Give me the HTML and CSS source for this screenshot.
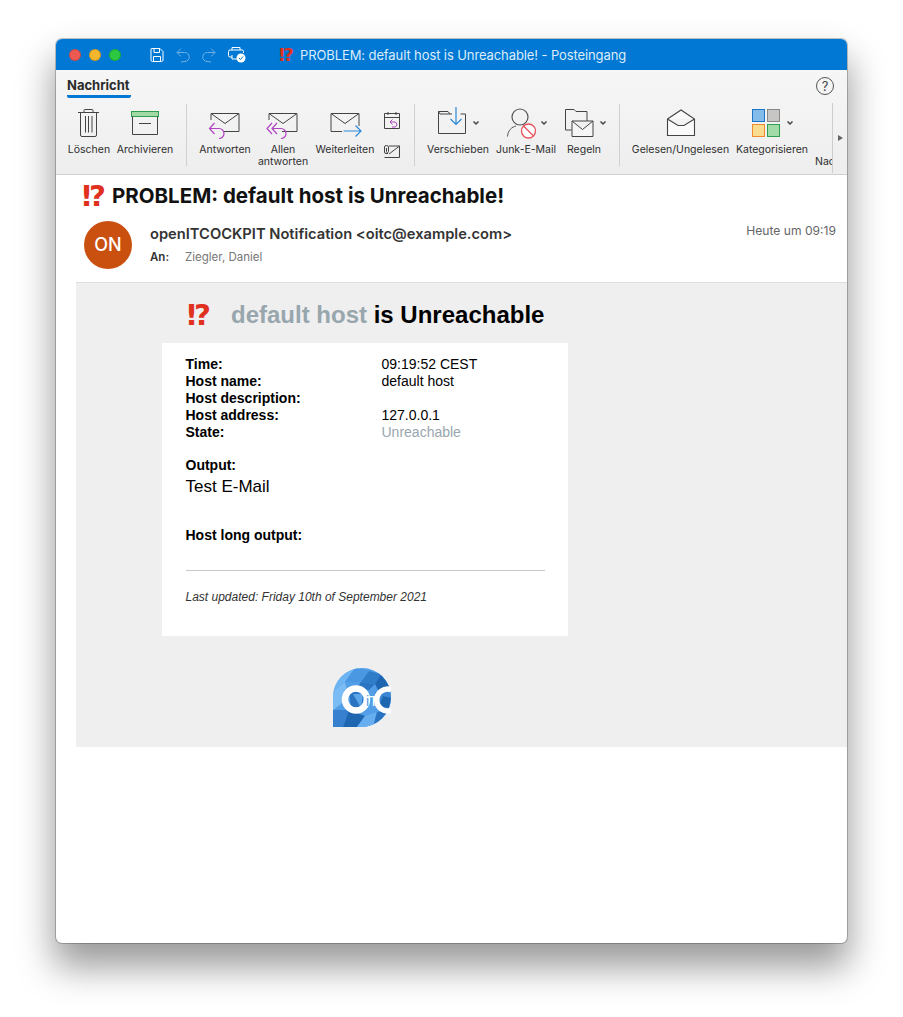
FILE: index.html
```html
<!DOCTYPE html>
<html lang="de">
<head>
<meta charset="utf-8">
<title>PROBLEM: default host is Unreachable!</title>
<link rel="stylesheet" href="styles.css">
</head>
<body>
<div class="window">
  <header class="titlebar">
    <div class="lights"><span class="light red"></span><span class="light yellow"></span><span class="light green"></span></div>
    <div class="quick">
      <svg class="qa" width="14" height="16" viewBox="0 0 14 16"><path d="M1.500 1.500H10L13 4.500V13Q13 14.500 11.500 14.500H2.500Q1 14.500 1 13V2Q1 1.500 1.500 1.500ZM4 1.500V5.500H9.500V1.500M3.500 14.500V9.500H10.500V14.500" fill="none" stroke="#fff" stroke-width="1"/></svg>
      <svg class="qa" width="14" height="16" viewBox="0 0 14 16"><path d="M1 5.500H8.500A4.500 4.500 0 0 1 9 14.500L5 15M1 5.500L5 1.500M1 5.500L5 9.500" fill="none" stroke="#6fb1e6" stroke-width="1"/></svg>
      <svg class="qa" width="14" height="16" viewBox="0 0 14 16"><path d="M13 5.500H5.500A4.500 4.500 0 0 0 5 14.500L9 15M13 5.500L9 1.500M13 5.500L9 9.500" fill="none" stroke="#6fb1e6" stroke-width="1"/></svg>
      <svg class="qa" width="18" height="17" viewBox="0 0 18 17"><path d="M4 4V1.500H12V4M4 11H2Q.5 11 .5 9.500V5.500Q.5 4 2 4H14Q15.500 4 15.500 5.500V7M4 9V13H9" fill="none" stroke="#fff" stroke-width="1"/><circle cx="13" cy="12" r="4.500" fill="#fff"/><path d="M11 12L12.500 13.500L15 10.500" fill="none" stroke="#0078d4" stroke-width="1"/></svg>
    </div>
    <div class="wintitle"><span class="alert alert-title">⁉</span><span>PROBLEM: default host is Unreachable! - Posteingang</span></div>
  </header>

  <section class="ribbon">
    <div class="tabrow">
      <span class="tab">Nachricht</span>
      <span class="help">?</span>
    </div>
    <div class="toolrow">
      <div class="tools">
        <div class="tool w42">
          <svg width="42" height="36" viewBox="0 0 42 36"><g fill="none" stroke="#444" stroke-width="1"><path d="M10 7.500H31M16 7.500V5.500Q16 4.500 17 4.500H24Q25 4.500 25 5.500V7.500M12.500 7.500V30Q12.500 31.500 14 31.500H27Q28.500 31.500 28.500 30V7.500M17.500 11V27.500M20.500 11V27.500M24 11V27.500"/></g></svg>
          <span class="label">Löschen</span>
        </div>
        <div class="tool w56">
          <svg width="56" height="36" viewBox="0 0 56 36"><rect x="14.500" y="6.500" width="27" height="5" fill="#a3d9a5" stroke="#2e9e4f"/><path d="M15.500 11.500V29.500H40.500V11.500M22 18.500H34" fill="none" stroke="#444"/></svg>
          <span class="label">Archivieren</span>
        </div>
        <span class="sep"></span>
        <div class="tool w52">
          <svg width="52" height="36" viewBox="0 0 52 36"><path d="M12 15V8.500H40V26.500H25M12 8.500L26 18.500L40 8.500" fill="none" stroke="#444"/><path d="M15.500 18L10.500 23.500L15.500 29M10.500 23.500H20A4.700 4.700 0 0 1 20 33.500" fill="none" stroke="#b146c2" stroke-width="1.200"/></svg>
          <span class="label">Antworten</span>
        </div>
        <div class="tool w50">
          <svg width="50" height="36" viewBox="0 0 50 36"><path d="M11 15V8.500H39V26.500H24M11 8.500L25 18.500L39 8.500" fill="none" stroke="#444"/><path d="M14 18L9 23.500L14 29M19 18L14 23.500L19 29M14 23.500H23A4.700 4.700 0 0 1 23 33.500" fill="none" stroke="#b146c2" stroke-width="1.200"/></svg>
          <span class="label">Allen<br>antworten</span>
        </div>
        <div class="tool w60">
          <svg width="60" height="36" viewBox="0 0 60 36"><path d="M44 21V8.500H16V26.500H27M16 8.500L30 18.500L44 8.500" fill="none" stroke="#444"/><path d="M28.500 26H46M40.500 20.500L46 26L40.500 31.500" fill="none" stroke="#2b88d8" stroke-width="1.200"/></svg>
          <span class="label">Weiterleiten</span>
        </div>
        <svg class="minis" width="24" height="54" viewBox="0 0 24 54"><path d="M4.500 8.500H19.500V23.500H4.500ZM4.500 12.500H19.500M8 7V10M16 7V10" fill="none" stroke="#444"/><path d="M12.500 14.500L10 17L12.500 19.500M10 17H15A2.600 2.600 0 0 1 15 22H12" fill="none" stroke="#b146c2"/><path d="M9 41H19.500V52.500H4.500M9 49L19.500 41" fill="none" stroke="#444"/><path d="M8 48.500H6Q4.500 48.500 4.500 47V42Q4.500 40.500 6.500 40.500Q8.500 40.500 8.500 42V46.500Q8.500 47.500 7.500 47.500Q6.500 47.500 6.500 46.500V43" fill="none" stroke="#444"/></svg>
        <span class="sep"></span>
        <div class="tool w62">
          <svg width="62" height="36" viewBox="0 0 62 36"><path d="M25 9H13L11.500 6.500V28.500H38.500V9H33.500M11.500 6.500H21L23 9" fill="none" stroke="#444"/><path d="M29 2V19.500M23.500 14L29 19.500L34.500 14" fill="none" stroke="#2b88d8" stroke-width="1.200"/><path d="M46.500 16.500L49 19L51.500 16.500" fill="none" stroke="#444" stroke-width="1.500"/></svg>
          <span class="label">Verschieben</span>
        </div>
        <div class="tool w60">
          <svg width="60" height="36" viewBox="0 0 60 36"><circle cx="24" cy="12" r="8" fill="none" stroke="#555" stroke-width="1.200"/><path d="M11.500 31.500C12 25 16 22 20 21" fill="none" stroke="#555"/><circle cx="32.500" cy="26" r="7" fill="#fff" stroke="#e8525a" stroke-width="1.300"/><path d="M27.500 21L37.500 31" stroke="#e8525a" stroke-width="1.300"/><path d="M45.500 16.500L48 19L50.500 16.500" fill="none" stroke="#444" stroke-width="1.500"/></svg>
          <span class="label">Junk-E-Mail</span>
        </div>
        <div class="tool w42">
          <svg width="42" height="36" viewBox="0 0 42 36"><path d="M2.500 4.500H11L13 6.500H24V16M2.500 4.500V25H8.500" fill="none" stroke="#444"/><path d="M9 16H30V31.500H9ZM9 16L19.500 24.500L30 16" fill="#f6f6f6" stroke="#444"/><path d="M37.500 16.500L40 19L42.500 16.500" fill="none" stroke="#444" stroke-width="1.500"/></svg>
          <span class="label">Regeln</span>
        </div>
        <span class="sep sep-wide"></span>
        <div class="tool w97">
          <svg width="97" height="36" viewBox="0 0 97 36"><path d="M35.500 14L49 5L62.500 14V30.500H35.500ZM35.500 14L46 20.500H52L62.500 14" fill="#fafafa" stroke="#444" stroke-width="1.100"/></svg>
          <span class="label">Gelesen/Ungelesen</span>
        </div>
        <div class="tool w72">
          <svg width="72" height="36" viewBox="0 0 72 36"><rect x="16.500" y="4.500" width="12" height="12" fill="#83bceb" stroke="#1b74c4"/><rect x="31.500" y="4.500" width="12" height="12" fill="#c8c6c4" stroke="#8a8886"/><rect x="16.500" y="19.500" width="12" height="12" fill="#f9dc8f" stroke="#f08a2c"/><rect x="31.500" y="19.500" width="12" height="12" fill="#a3dba8" stroke="#2e9e4f"/><path d="M51.500 16.500L54 19L56.500 16.500" fill="none" stroke="#444" stroke-width="1.500"/></svg>
          <span class="label">Kategorisieren</span>
        </div>
        <div class="tool w20 cut">
          <span class="label">Nac</span>
        </div>
      </div>
      <div class="scroller"><span class="scroll-arrow"></span></div>
    </div>
  </section>

  <section class="message">
    <h1 class="subject"><span class="alert alert-subject">⁉</span>PROBLEM: default host is Unreachable!</h1>
    <div class="meta">
      <div class="avatar">ON</div>
      <div class="who">
        <div class="sender">openITCOCKPIT Notification &lt;oitc@example.com&gt;</div>
        <div class="to"><b>An:</b><span>Ziegler, Daniel</span></div>
      </div>
      <div class="when">Heute um 09:19</div>
    </div>

    <div class="mail">
      <h2 class="headline"><span class="alert alert-head">⁉</span><span class="host">default host</span> is Unreachable</h2>
      <div class="card">
        <dl class="facts">
          <dt>Time:</dt><dd>09:19:52 CEST</dd>
          <dt>Host name:</dt><dd>default host</dd>
          <dt>Host description:</dt><dd></dd>
          <dt>Host address:</dt><dd>127.0.0.1</dd>
          <dt>State:</dt><dd class="muted">Unreachable</dd>
        </dl>
        <div class="strong out">Output:</div>
        <div class="outtext">Test E-Mail</div>
        <div class="strong long">Host long output:</div>
        <hr class="rule">
        <p class="updated">Last updated: Friday 10th of September 2021</p>
      </div>
      <svg class="logo" width="58" height="59" viewBox="0 0 58 59">
        <defs><clipPath id="drop"><path d="M0 59V29A29 29 0 0 1 58 29A30 30 0 0 1 28 59Z"/></clipPath></defs>
        <g clip-path="url(#drop)">
          <rect width="58" height="59" fill="#529fe8"/>
          <polygon points="0,0 22,0 12,14 0,24" fill="#6db4f2"/>
          <polygon points="22,0 36,3 28,14 12,14" fill="#4a97e2"/>
          <polygon points="36,3 48,6 42,16 28,14" fill="#2f7cc9"/>
          <polygon points="48,6 58,20 46,24 42,16" fill="#1f66b0"/>
          <polygon points="28,14 42,16 36,22 24,20" fill="#2a74c2"/>
          <polygon points="0,24 12,14 16,30 0,42" fill="#7cbcf4"/>
          <polygon points="16,22 30,26 30,40 18,40" fill="#2a74c2"/>
          <polygon points="30,26 20,26 28,40" fill="#5ea6ea"/>
          <polygon points="42,24 58,22 58,42 44,40" fill="#3a87d6"/>
          <polygon points="50,28 58,30 56,40 46,38" fill="#1f66b0"/>
          <polygon points="0,42 16,42 10,59 0,59" fill="#3680cf"/>
          <polygon points="10,59 16,42 32,48 24,59" fill="#1f66b0"/>
          <polygon points="32,48 44,44 40,59 24,59" fill="#66aef0"/>
          <polygon points="44,44 58,42 50,59 40,59" fill="#2a74c2"/>
        </g>
        <circle cx="23" cy="31.500" r="11" fill="none" stroke="#fff" stroke-width="6.500"/>
        <path d="M58 21.500A11 11 0 1 0 58 42.500" fill="none" stroke="#fff" stroke-width="5.500"/>
        <text class="logo-mark" x="33" y="37.500"><tspan class="logo-i">i</tspan>T</text>
      </svg>
    </div>
  </section>
</div>
</body>
</html>
```

FILE: styles.css
```css
* { box-sizing: border-box; }
html, body { margin: 0; padding: 0; background: #fff; }
body { width: 903px; height: 1017px; overflow: hidden; padding: 39px 56px 0; font-family: Inter, "Liberation Sans", sans-serif; }

.window {
  width: 791px; height: 904px; background: #fff; border-radius: 6px;
  box-shadow: 0 0 0 1px rgba(0,0,0,.22), 0 22px 36px 2px rgba(0,0,0,.4);
  display: flex; flex-direction: column;
}

.titlebar {
  height: 31px; background: #0078d4; border-radius: 6px 6px 0 0; display: flex; align-items: center;
  padding-left: 13px; color: #dcecf9; font-size: 13px; letter-spacing: -.1px; flex: none;
}
.lights { display: flex; gap: 8px; width: 81px; }
.light { width: 12px; height: 12px; border-radius: 50%; border: 1px solid rgba(0,0,0,.15); }
.red { background: #ee5a52; }
.yellow { background: #f4b62c; }
.green { background: #2bc840; }
.quick { display: flex; align-items: center; width: 129px; }
.qa { margin-right: 12px; flex: none; }
.wintitle { display: flex; align-items: center; white-space: nowrap; }
.alert { font-family: "DejaVu Sans", sans-serif; font-weight: 700; color: #e0301e; }
.alert-title { font-size: 18px; line-height: 20px; width: 21px; }

.ribbon { height: 105px; background: linear-gradient(#f6f6f6, #eeeeee); border-bottom: 1px solid #cfcfcf; flex: none; }
.tabrow { height: 28px; padding: 7px 13px 0 11px; display: flex; justify-content: space-between; align-items: flex-start; }
.tab { font-size: 13px; font-weight: 700; color: #2b2b2b; line-height: 16px; height: 21px; border-bottom: 3px solid #0078d4; border-radius: 0 0 2px 2px; padding-right: 1px; }
.help { width: 18px; height: 18px; border: 1px solid #555; border-radius: 50%; font-size: 13px; line-height: 16px; text-align: center; color: #444; }
.toolrow { display: flex; height: 76px; }
.tools { width: 776px; display: flex; gap: 7px; padding-left: 12px; align-items: flex-start; padding-top: 7px; overflow: hidden; height: 76px; }
.tool { display: flex; flex-direction: column; align-items: center; flex: none; }
.w20 { width: 20px; } .w42 { width: 42px; } .w50 { width: 50px; } .w52 { width: 52px; } .w56 { width: 56px; }
.w60 { width: 60px; } .w62 { width: 62px; } .w72 { width: 72px; } .w97 { width: 97px; }
.tool svg { display: block; flex: none; overflow: visible; }
.label { font-size: 10.500px; line-height: 12px; color: #2e2e2e; text-align: center; white-space: nowrap; margin-top: 3px; }
.cut { align-items: flex-start; padding-top: 48px; }
.sep { width: 1px; height: 62px; background: #d0d0d0; margin: -1px 5px 0 6px; flex: none; }
.sep-wide { margin-left: 7px; }
.minis { flex: none; margin: 0 -3px 0 -2px; }
.scroller { width: 15px; border-left: 1px solid #cdcdcd; flex: none; height: 70px; margin-top: 5px; display: flex; align-items: center; justify-content: center; }
.scroll-arrow { width: 0; height: 0; border-left: 5px solid #666; border-top: 3.500px solid transparent; border-bottom: 3.500px solid transparent; }

.message { flex: 1; }
.subject { margin: 0; height: 46px; padding: 9px 0 0 26px; font-size: 20.500px; line-height: 24px; font-weight: 700; color: #111; display: flex; white-space: nowrap; }
.alert-subject { font-size: 29px; width: 30px; }
.meta { height: 61px; display: flex; align-items: flex-start; padding: 0 11px 0 28px; }
.avatar { width: 48px; height: 48px; border-radius: 50%; background: #ca5010; color: #fff; font-size: 18px; font-weight: 500; line-height: 48px; text-align: center; flex: none; }
.who { margin-left: 18px; flex: 1; padding-top: 4px; }
.sender { font-size: 14.700px; line-height: 18px; font-weight: 600; color: #333; white-space: nowrap; }
.to { font-size: 11.500px; line-height: 14px; margin-top: 7px; display: flex; color: #777; }
.to b { width: 35px; font-weight: 600; color: #333; }
.when { font-size: 12.100px; line-height: 16px; color: #666; padding-top: 2px; }

.mail { margin-left: 20px; height: 465px; background: #efefef; border-top: 1px solid #dedede; font-family: "Liberation Sans", Arial, sans-serif; color: #000; padding-top: 17px; }
.headline { margin: 0 0 0 111px; height: 43px; font-size: 24px; line-height: 30px; font-weight: 700; display: flex; white-space: pre; }
.alert-head { font-size: 29px; width: 44px; }
.host { color: #98a6ad; }
.card { margin-left: 86px; width: 406px; height: 293px; background: #fff; padding: 12.500px 24px 0 23.500px; font-size: 14px; line-height: 17px; }
.facts { margin: 0; display: grid; grid-template-columns: 196px 1fr; }
.facts dt { font-weight: 700; }
.facts dd { margin: 0; min-height: 17px; }
.muted { color: #98a6ad; }
.strong { font-weight: 700; }
.out { margin-top: 16px; }
.outtext { font-size: 17px; line-height: 18px; margin-top: 4px; }
.long { margin-top: 31px; }
.rule { margin: 26px 0 0; border: 0; border-top: 1px solid #c8c8c8; width: 359px; }
.updated { margin: 19px 0 0; font-size: 12px; line-height: 14px; font-style: italic; color: #333; }
.logo { display: block; margin: 32px 0 0 257px; }
.logo-mark { font-family: "Liberation Sans", sans-serif; font-size: 14px; fill: #fff; }
.logo-i { fill: #4f9be6; }
```
